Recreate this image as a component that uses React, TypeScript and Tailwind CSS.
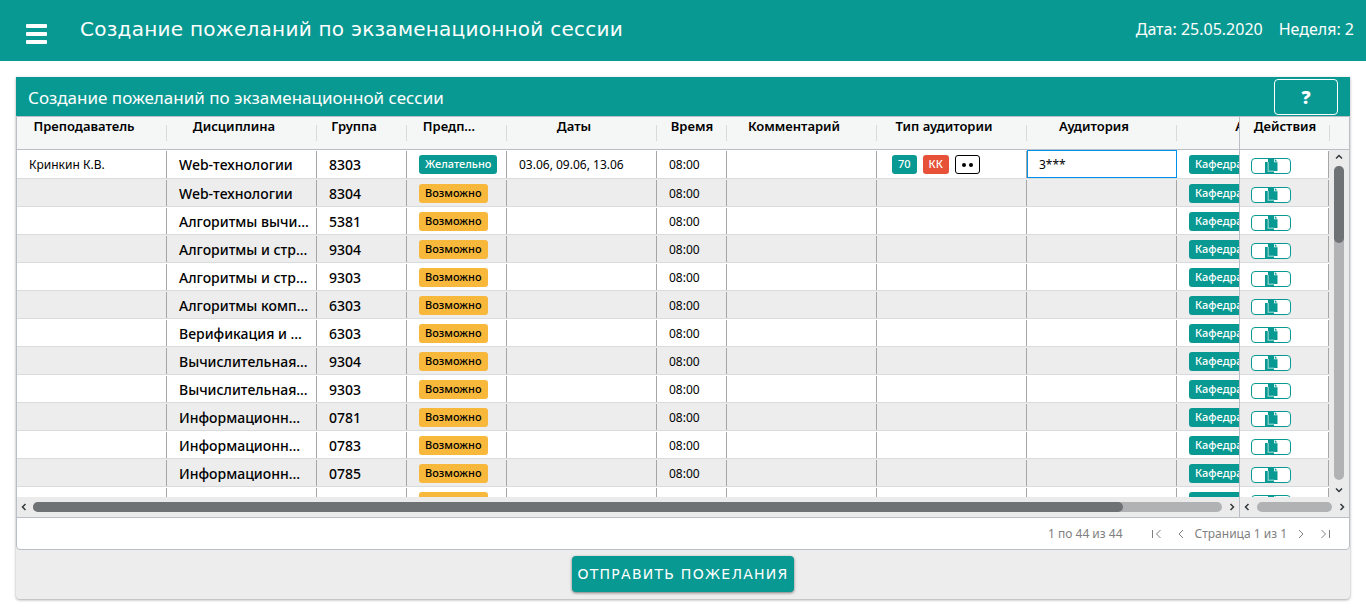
import React from "react";

type Row = {
    teacher: string;
    subject: string;
    group: string;
    wanted?: boolean;
    dates?: string;
    room?: string;
};

const columns = [
    { title: "Преподаватель", width: "w-[150px]", menu: true },
    { title: "Дисциплина", width: "w-[150px]", menu: true },
    { title: "Группа", width: "w-[90px]", menu: true },
    { title: "Предп…", width: "w-[100px]", menu: true },
    { title: "Даты", width: "w-[150px]", menu: true },
    { title: "Время", width: "w-[70px]", menu: false },
    { title: "Комментарий", width: "w-[150px]", menu: true },
    { title: "Тип аудитории", width: "w-[150px]", menu: true },
    { title: "Аудитория", width: "w-[150px]", menu: true },
    { title: "АК", width: "w-[150px]", menu: true },
];

const rows: Row[] = [
    { teacher: "Кринкин К.В.", subject: "Web-технологии", group: "8303", wanted: true, dates: "03.06, 09.06, 13.06", room: "3***" },
    { teacher: "", subject: "Web-технологии", group: "8304" },
    { teacher: "", subject: "Алгоритмы вычи…", group: "5381" },
    { teacher: "", subject: "Алгоритмы и стр…", group: "9304" },
    { teacher: "", subject: "Алгоритмы и стр…", group: "9303" },
    { teacher: "", subject: "Алгоритмы комп…", group: "6303" },
    { teacher: "", subject: "Верификация и …", group: "6303" },
    { teacher: "", subject: "Вычислительная…", group: "9304" },
    { teacher: "", subject: "Вычислительная…", group: "9303" },
    { teacher: "", subject: "Информационн…", group: "0781" },
    { teacher: "", subject: "Информационн…", group: "0783" },
    { teacher: "", subject: "Информационн…", group: "0785" },
    { teacher: "", subject: "Компьютерная Г…", group: "6381" },
];

function Badge({ color, children }: { color: string; children: React.ReactNode }) {
    return (
        <span className={`inline-flex h-[19px] shrink-0 items-center rounded-[3px] px-[6px] text-[11px] font-medium ${color}`}>
            {children}
        </span>
    );
}

function Cell({ className = "", active = false, children }: { className?: string; active?: boolean; children?: React.ReactNode }) {
    return (
        <td className="h-7 border-b border-[#d9dcde] p-0">
            {active ? (
                <div className={`flex h-7 items-center border border-[#0091ea] pl-[11px] pt-px ${className}`}>{children}</div>
            ) : (
                <div
                    className={`mt-px flex h-[26px] items-center border-r border-[#a6a6a6] pl-3 pt-px group-first:h-[27px] group-first:pt-0 ${className}`}
                >
                    {children}
                </div>
            )}
        </td>
    );
}

function HeadCell({ title, width, menu }: { title: string; width: string; menu: boolean }) {
    return (
        <th scope="col" className={`h-[33px] border-b border-[#babfc7] p-0 align-top text-[13px] font-semibold ${width}`}>
            <div className="relative h-8">
                <div className={`whitespace-nowrap text-center leading-[19px] ${menu ? "pl-3 pr-7" : "px-3"}`}>{title}</div>
                <span className="absolute right-0 top-2 h-4 w-px bg-[#d8dbdd]" />
            </div>
        </th>
    );
}

function CopyIcon() {
    return (
        <svg viewBox="0 0 13 15" className="h-[15px] w-[13px] shrink-0">
            <path fill="#089992" d="M0 3h3v9h6v3H0z" />
            <path fill="#089992" d="M3 0h6.200v3.300h3.300V12H3z" />
            <path fill="none" stroke="#fff" strokeOpacity="0.45" strokeWidth="0.500" d="M3.200 3v9.200h6" />
            <path fill="#089992" d="M10 0.200L12.500 2.600H10z" />
        </svg>
    );
}

function Chevron({ d }: { d: string }) {
    return (
        <svg viewBox="0 0 12 12" className="h-3 w-3 shrink-0" fill="none" stroke="currentColor">
            <path d={d} />
        </svg>
    );
}

const LEFT = "M7.500 3L4.500 6L7.500 9";
const RIGHT = "M4.500 3L7.500 6L4.500 9";
const UP = "M3 7.500L6 4.500L9 7.500";
const DOWN = "M3 4.500L6 7.500L9 4.500";

function MainTable() {
    return (
        <table className="w-[1310px] table-fixed border-separate border-spacing-0">
            <thead className="bg-[#f5f7f7]">
                <tr>
                    {columns.map((c) => (
                        <HeadCell key={c.title} {...c} />
                    ))}
                </tr>
            </thead>
            <tbody>
                {rows.map((r, i) => (
                    <tr key={i} className="group bg-white even:bg-[#ededed]">
                        <Cell className="text-xs">{r.teacher}</Cell>
                        <Cell className="whitespace-nowrap text-sm font-medium">{r.subject}</Cell>
                        <Cell className="text-sm font-medium">{r.group}</Cell>
                        <Cell>
                            {r.wanted ? (
                                <Badge color="bg-[#089992] text-white">Желательно</Badge>
                            ) : (
                                <Badge color="bg-[#f7b83c] text-black">Возможно</Badge>
                            )}
                        </Cell>
                        <Cell className="text-xs">{r.dates}</Cell>
                        <Cell className="text-xs">08:00</Cell>
                        <Cell />
                        <Cell>
                            {r.wanted && (
                                <div className="flex gap-[6px] pl-[3px]">
                                    <Badge color="bg-[#089992] text-white">70</Badge>
                                    <Badge color="bg-[#e75138] text-white">КК</Badge>
                                    <Badge color="gap-[3px] border border-black bg-white">
                                        <i className="h-1 w-1 rounded-full bg-black" />
                                        <i className="h-1 w-1 rounded-full bg-black" />
                                    </Badge>
                                </div>
                            )}
                        </Cell>
                        <Cell className="text-xs" active={!!r.room}>{r.room}</Cell>
                        <Cell>
                            <Badge color="bg-[#089992] text-white">Кафедра</Badge>
                        </Cell>
                    </tr>
                ))}
            </tbody>
        </table>
    );
}

function ActionsTable() {
    return (
        <table className="w-[89px] table-fixed border-separate border-spacing-0">
            <tbody>
                {rows.map((r, i) => (
                    <tr key={i} className="group bg-white even:bg-[#ededed]">
                        <Cell>
                            <button
                                aria-label={`Копировать ${r.group}`}
                                className="-ml-px mt-[3px] flex h-4 w-10 items-center justify-center overflow-hidden rounded-[4px] border border-[#089992] bg-white"
                            >
                                <CopyIcon />
                            </button>
                        </Cell>
                    </tr>
                ))}
            </tbody>
        </table>
    );
}

function App() {
    return (
        <div className="font-['Noto_Sans',sans-serif] text-black">
            <header className="flex h-[61px] items-center bg-[#089992] pb-[3px] pl-[26px] pr-3 text-white">
                <button aria-label="Меню" className="mt-[10px] flex w-[21px] flex-col gap-1">
                    <span className="h-1 rounded-[1px] bg-white" />
                    <span className="h-1 rounded-[1px] bg-white" />
                    <span className="h-1 rounded-[1px] bg-white" />
                </button>
                <h1 className="ml-[33px] flex-1 font-['DejaVu_Sans',sans-serif] text-xl tracking-[0.0125em]">
                    Создание пожеланий по экзаменационной сессии
                </h1>
                <div className="flex gap-4 text-base">
                    <span>Дата: 25.05.2020</span>
                    <span>Неделя: 2</span>
                </div>
            </header>

            <main className="m-4 rounded-b bg-[#ededed] shadow-[0_1px_3px_rgba(0,0,0,0.35)]">
                <div className="flex h-[39px] items-center justify-between bg-[#089992] pl-3 pr-3 text-white">
                    <h2 className="pt-[2px] text-[17px]">Создание пожеланий по экзаменационной сессии</h2>
                    <button className="h-9 w-16 rounded border border-white text-lg font-black">?</button>
                </div>

                <section className="rounded-b-sm border border-[#babfc7] bg-white">
                    <div className="flex border-b border-[#babfc7] text-[#33383c] [&_path]:[stroke-width:1.5]">
                        <div className="flex min-w-0 flex-1 flex-col">
                            <div className="h-[380px] overflow-hidden text-black">
                                <MainTable />
                            </div>
                            <div className="flex h-5 items-center bg-[#ebebeb] px-px">
                                <Chevron d={LEFT} />
                                <div className="ml-[3px] mr-1 h-[10px] flex-1 rounded-full bg-[#b1b2b4]">
                                    <div className="h-full w-11/12 rounded-full bg-[#6e7275]" />
                                </div>
                                <Chevron d={RIGHT} />
                            </div>
                        </div>

                        <div className="flex w-[110px] flex-col border-l border-[#babfc7]">
                            <div className="flex h-[33px] border-b border-[#babfc7] bg-[#f5f7f7]">
                                <div className="relative w-[90px] text-center text-[13px] font-semibold leading-[19px] text-black">
                                    Действия
                                    <span className="absolute right-0 top-2 h-4 w-px bg-[#d8dbdd]" />
                                </div>
                            </div>
                            <div className="flex h-[347px] overflow-hidden">
                                <ActionsTable />
                                <div className="flex h-[347px] flex-1 flex-col items-center bg-[#ebebeb] py-px">
                                    <Chevron d={UP} />
                                    <div className="mb-1 mt-[3px] w-[10px] flex-1 rounded-full bg-[#b1b2b4]">
                                        <div className="h-[77px] rounded-full bg-[#6e7275]" />
                                    </div>
                                    <Chevron d={DOWN} />
                                </div>
                            </div>
                            <div className="flex h-5 items-center bg-[#ebebeb] px-px">
                                <Chevron d={LEFT} />
                                <div className="mx-1 h-[10px] flex-1 rounded-full bg-[#b1b2b4]" />
                                <Chevron d={RIGHT} />
                            </div>
                        </div>
                    </div>

                    <div className="flex h-[31px] items-center justify-end pr-[18px] text-xs text-[#7f7f7f]">
                        <span className="mr-[28px]">1 по 44 из 44</span>
                        <button aria-label="Первая страница"><Chevron d="M1.500 2v8M9.500 2L5.500 6L9.500 10" /></button>
                        <button aria-label="Назад" className="ml-3"><Chevron d="M8 2L4 6L8 10" /></button>
                        <span className="mx-2">Страница 1 из 1</span>
                        <button aria-label="Вперед"><Chevron d="M4 2L8 6L4 10" /></button>
                        <button aria-label="Последняя страница" className="ml-3"><Chevron d="M2.500 2L6.500 6L2.500 10M10.500 2v8" /></button>
                    </div>
                </section>

                <div className="flex h-[49px] items-center justify-center pb-px">
                    <button className="h-9 rounded bg-[#089992] px-[5px] font-['DejaVu_Sans',sans-serif] text-sm tracking-[0.09em] text-white shadow-[0_1px_3px_rgba(0,0,0,0.5)]">
                        ОТПРАВИТЬ ПОЖЕЛАНИЯ
                    </button>
                </div>
            </main>
        </div>
    );
}

export default App;
